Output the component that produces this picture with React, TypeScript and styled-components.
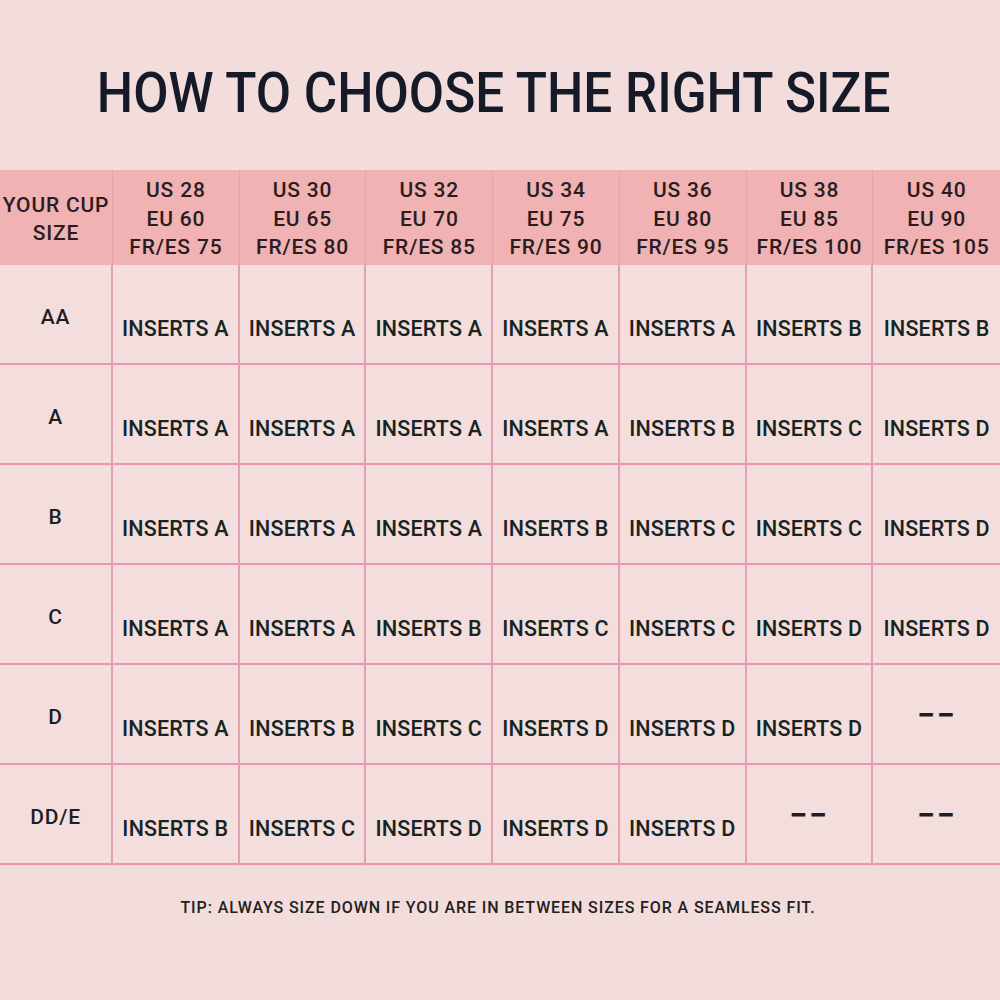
import React from "react";
import styled, { createGlobalStyle } from "styled-components";

const Global = createGlobalStyle`
  html, body { margin: 0; padding: 0; background: #f3dcdc; }
  body { font-family: Roboto, "Liberation Sans", sans-serif; }
`;

const Page = styled.div`
  width: 1000px;
  height: 1000px;
  background: #f3dcdc;
  display: flex;
  flex-direction: column;
`;

const TitleBar = styled.div`
  height: 170px;
  display: flex;
  align-items: center;
  justify-content: center;
  padding-top: 16px;
  padding-right: 12px;
  box-sizing: border-box;
`;

const Title = styled.h1`
  margin: 0;
  font-family: Roboto, sans-serif;
  font-weight: 500;
  font-size: 56px;
  letter-spacing: 0px;
  color: #161a28;
  white-space: nowrap;
  transform: scaleX(0.915);
`;

const Table = styled.div`
  display: grid;
  grid-template-columns: 113px repeat(7, 1fr);
  grid-template-rows: 95px repeat(6, 100px);
`;

const HeadCell = styled.div<{ $last?: boolean }>`
  background: #f0b2b2;
  border-right: ${(p) => (p.$last ? "none" : "1px solid #e9a3a6")};
  display: flex;
  flex-direction: column;
  align-items: center;
  justify-content: center;
  font-size: 21px;
  font-weight: 500;
  letter-spacing: 0.8px;
  line-height: 28.5px;
  color: #2a1c20;
  text-align: center;
  white-space: nowrap;
  padding-top: 3px;
`;

const Cell = styled.div<{ $last?: boolean; $label?: boolean }>`
  background: #f3dddd;
  border-right: ${(p) => (p.$last ? "none" : "2px solid #e3a2b4")};
  border-bottom: 2px solid #ef92b0;
  display: flex;
  align-items: center;
  justify-content: center;
  box-sizing: border-box;
  font-size: ${(p) => (p.$label ? "21px" : "21.5px")};
  font-weight: 500;
  letter-spacing: ${(p) => (p.$label ? "0.8px" : "0.2px")};
  color: ${(p) => (p.$label ? "#1d1d22" : "#17241f")};
  white-space: nowrap;
  padding-top: ${(p) => (p.$label ? "6px" : "28px")};
`;

const Dash = styled.span`
  font-size: 32px;
  font-weight: 700;
  letter-spacing: 2px;
  line-height: 1;
  padding-bottom: 4px;
`;

const Tip = styled.div`
  height: 84px;
  display: flex;
  align-items: center;
  justify-content: center;
  font-size: 16px;
  font-weight: 500;
  letter-spacing: 0.9px;
  color: #1d2220;
  padding-bottom: 2px;
  padding-right: 4px;
`;

const sizes = [
  ["US 28", "EU 60", "FR/ES 75"],
  ["US 30", "EU 65", "FR/ES 80"],
  ["US 32", "EU 70", "FR/ES 85"],
  ["US 34", "EU 75", "FR/ES 90"],
  ["US 36", "EU 80", "FR/ES 95"],
  ["US 38", "EU 85", "FR/ES 100"],
  ["US 40", "EU 90", "FR/ES 105"],
];

const rows: [string, (string | null)[]][] = [
  ["AA", ["A", "A", "A", "A", "A", "B", "B"]],
  ["A", ["A", "A", "A", "A", "B", "C", "D"]],
  ["B", ["A", "A", "A", "B", "C", "C", "D"]],
  ["C", ["A", "A", "B", "C", "C", "D", "D"]],
  ["D", ["A", "B", "C", "D", "D", "D", null]],
  ["DD/E", ["B", "C", "D", "D", "D", null, null]],
];

export default function App() {
  return (
    <Page>
      <Global />
      <TitleBar>
        <Title>HOW TO CHOOSE THE RIGHT SIZE</Title>
      </TitleBar>
      <Table>
        <HeadCell>
          <span>YOUR CUP</span>
          <span>SIZE</span>
        </HeadCell>
        {sizes.map((s, i) => (
          <HeadCell key={i} $last={i === sizes.length - 1}>
            {s.map((l) => (
              <span key={l}>{l}</span>
            ))}
          </HeadCell>
        ))}
        {rows.map(([label, vals]) => (
          <React.Fragment key={label}>
            <Cell $label>{label}</Cell>
            {vals.map((v, i) => (
              <Cell key={i} $last={i === vals.length - 1} $label={v === null}>
                {v === null ? <Dash>−−</Dash> : `INSERTS ${v}`}
              </Cell>
            ))}
          </React.Fragment>
        ))}
      </Table>
      <Tip>TIP: ALWAYS SIZE DOWN IF YOU ARE IN BETWEEN SIZES FOR A SEAMLESS FIT.</Tip>
    </Page>
  );
}
